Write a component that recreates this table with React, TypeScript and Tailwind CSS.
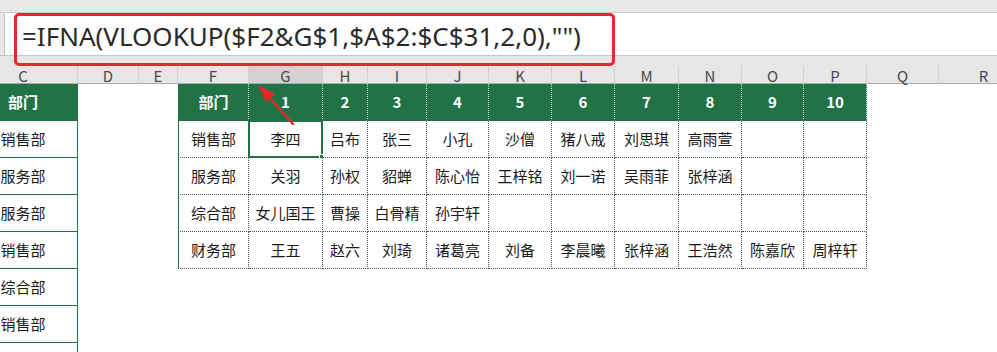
import React from "react";

const letters = ["C", "D", "E", "F", "G", "H", "I", "J", "K", "L", "M", "N", "O", "P", "Q", "R"];

const colC = ["部门", "销售部", "服务部", "服务部", "销售部", "综合部", "销售部", ""];

const table = [
  ["部门", "1", "2", "3", "4", "5", "6", "7", "8", "9", "10"],
  ["销售部", "李四", "吕布", "张三", "小孔", "沙僧", "猪八戒", "刘思琪", "高雨萱", "", ""],
  ["服务部", "关羽", "孙权", "貂蝉", "陈心怡", "王梓铭", "刘一诺", "吴雨菲", "张梓涵", "", ""],
  ["综合部", "女儿国王", "曹操", "白骨精", "孙宇轩", "", "", "", "", "", ""],
  ["财务部", "王五", "赵六", "刘琦", "诸葛亮", "刘备", "李晨曦", "张梓涵", "王浩然", "陈嘉欣", "周梓轩"],
];

const gridCols =
  "grid grid-cols-[109px_61px_39px_71px_74px_45px_59px_62px_63px_63px_64px_63px_62px_63px_72px_90px]";

function TableCell({ r, c }: { r: number; c: number }) {
  const text = table[r][c];
  const head = r === 0;
  const first = c === 0;
  const selected = r === 1 && c === 1;
  return (
    <div
      className={
        "relative h-[37px] flex items-center justify-center text-[15px] border-r border-b border-dotted " +
        (head
          ? "bg-[#217346] text-white font-bold border-r-[#cfe0d5] border-b-[#2d5a41] "
          : "bg-white text-[#1a1a1a] border-[#3d5f4b] ") +
        (first ? "border-l border-l-[#217346] " : "")
      }
      style={first ? { borderLeftStyle: "solid" } : undefined}
    >
      {text}
      {selected && (
        <div className="absolute -left-px -top-px -right-px -bottom-px border-2 border-[#217346]">
          <div className="absolute -right-[4px] -bottom-[4px] w-[6px] h-[6px] bg-[#217346] border border-white" />
        </div>
      )}
    </div>
  );
}

export default function App() {
  return (
    <div className="relative w-[997px] h-[352px] overflow-hidden bg-white font-['Noto_Sans_CJK_SC',sans-serif]">
      {/* top strip */}
      <div className="h-[13px] bg-[#e8e8e8] border-b border-[#cacaca]" />

      {/* formula bar */}
      <div className="flex h-[43px] border-b border-[#c6c6c6]">
        <div className="w-[5px] bg-[#e8e8e8] border-r border-[#c6c6c6]" />
        <div className="flex-1 bg-white pl-[17px] flex items-center pt-[3px] text-[26px] text-[#2a2a2a] font-['Noto_Sans',sans-serif] leading-none">
          =IFNA(VLOOKUP($F2&amp;G$1,$A$2:$C$31,2,0),"")
        </div>
      </div>
      <div className="h-[10px] bg-[#e6e6e6]" />

      <div className={"ml-[-31px] " + gridCols}>
        {/* column letters */}
        {letters.map((l) => (
          <div
            key={l}
            className={
              "h-[18px] flex items-center justify-center pt-[2px] text-[15px] leading-none text-[#4a4a4a] border-r border-b border-r-[#d0d0d0] border-b-[#a9a9a9] " +
              (l === "G" ? "bg-[#d2d2d2]" : "bg-[#e6e6e6]")
            }
          >
            {l}
          </div>
        ))}

        {/* rows */}
        {colC.map((cText, r) => (
          <React.Fragment key={r}>
            <div
              className={
                "h-[37px] flex items-center justify-center text-[15px] border-r border-b border-[#217346] " +
                (r === 0 ? "bg-[#217346] text-white font-bold" : "bg-white text-[#1a1a1a]")
              }
            >
              {cText}
            </div>
            <div className="h-[37px]" />
            <div className="h-[37px]" />
            {r < table.length
              ? table[r].map((_, c) => <TableCell key={c} r={r} c={c} />)
              : Array.from({ length: 11 }).map((_, c) => <div key={c} className="h-[37px]" />)}
            <div className="h-[37px]" />
            <div className="h-[37px]" />
          </React.Fragment>
        ))}
      </div>

      {/* red highlight around formula */}
      <div className="absolute left-[14px] top-[13px] w-[601px] h-[53px] border-[3px] border-[#e3292b] rounded-[5px]" />

      {/* red arrow */}
      <svg className="absolute left-0 top-0" width="997" height="352" viewBox="0 0 997 352">
        <line x1="293" y1="124" x2="268" y2="96" stroke="#e3292b" strokeWidth="2.5" strokeLinecap="round" />
        <polygon points="258,85 275,94 266,102" fill="#e3292b" />
      </svg>
    </div>
  );
}
